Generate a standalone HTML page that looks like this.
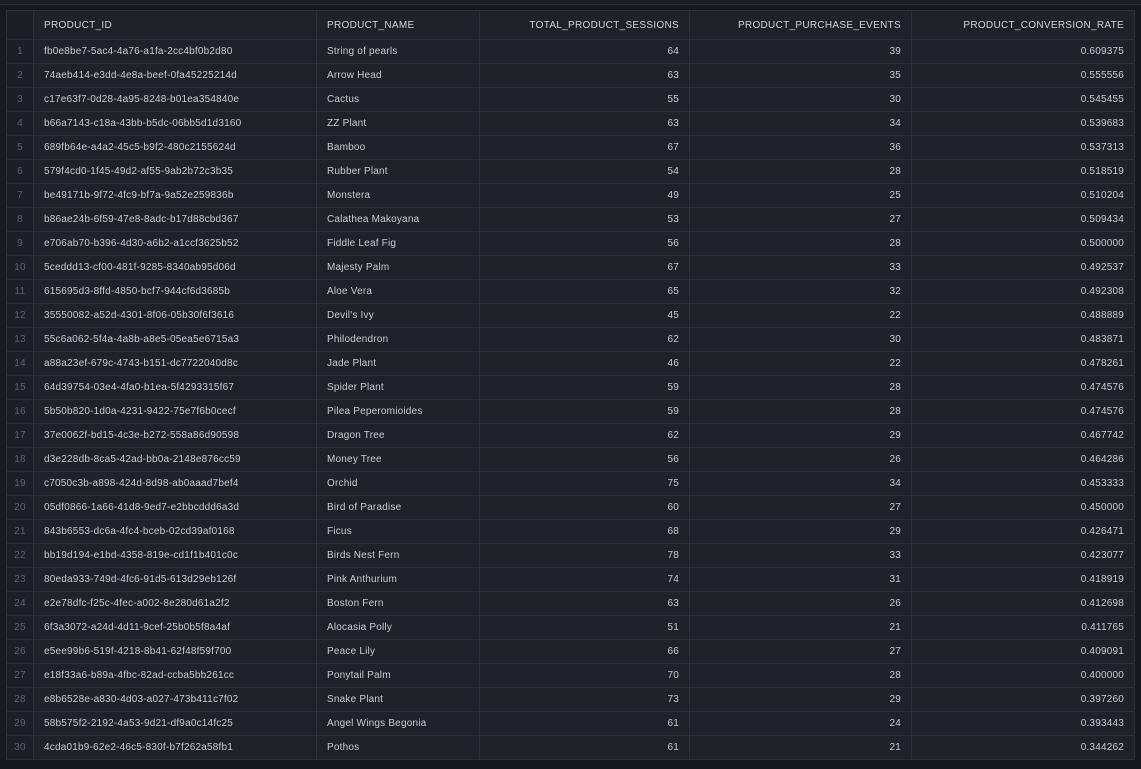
<!DOCTYPE html>
<html><head><meta charset="utf-8"><style>
html,body{margin:0;padding:0;background:#161a20;width:1141px;height:769px;overflow:hidden;font-family:"Liberation Sans",sans-serif;}
.top{position:absolute;left:0;top:0;width:1141px;height:4px;background:#1a1e25;border-bottom:1px solid #262b34;}
table{position:absolute;left:6px;top:10px;border-collapse:collapse;table-layout:fixed;width:1128px;background:#1e222b;border:1px solid #2e3440;}
td,th{border:1px solid #2b303a;height:23px;padding:0 10px;font-size:10px;letter-spacing:0.2px;color:#c8ccd3;white-space:nowrap;overflow:hidden;}
th{height:28px;font-weight:normal;color:#d0d3d9;text-align:left;font-size:10px;letter-spacing:0.3px;}
td.i,th.i{background:#1b1f27;color:#5d6370;text-align:center;padding:0;}
.r{text-align:right;}
</style></head><body><div class="top"></div>
<table>
<colgroup><col style="width:27px"><col style="width:283px"><col style="width:163px"><col style="width:210px"><col style="width:222px"><col style="width:223px"></colgroup>
<tr><th class="i"></th><th>PRODUCT_ID</th><th>PRODUCT_NAME</th><th class="r">TOTAL_PRODUCT_SESSIONS</th><th class="r">PRODUCT_PURCHASE_EVENTS</th><th class="r">PRODUCT_CONVERSION_RATE</th></tr>
<tr><td class="i">1</td><td>fb0e8be7-5ac4-4a76-a1fa-2cc4bf0b2d80</td><td>String of pearls</td><td class="r">64</td><td class="r">39</td><td class="r">0.609375</td></tr>
<tr><td class="i">2</td><td>74aeb414-e3dd-4e8a-beef-0fa45225214d</td><td>Arrow Head</td><td class="r">63</td><td class="r">35</td><td class="r">0.555556</td></tr>
<tr><td class="i">3</td><td>c17e63f7-0d28-4a95-8248-b01ea354840e</td><td>Cactus</td><td class="r">55</td><td class="r">30</td><td class="r">0.545455</td></tr>
<tr><td class="i">4</td><td>b66a7143-c18a-43bb-b5dc-06bb5d1d3160</td><td>ZZ Plant</td><td class="r">63</td><td class="r">34</td><td class="r">0.539683</td></tr>
<tr><td class="i">5</td><td>689fb64e-a4a2-45c5-b9f2-480c2155624d</td><td>Bamboo</td><td class="r">67</td><td class="r">36</td><td class="r">0.537313</td></tr>
<tr><td class="i">6</td><td>579f4cd0-1f45-49d2-af55-9ab2b72c3b35</td><td>Rubber Plant</td><td class="r">54</td><td class="r">28</td><td class="r">0.518519</td></tr>
<tr><td class="i">7</td><td>be49171b-9f72-4fc9-bf7a-9a52e259836b</td><td>Monstera</td><td class="r">49</td><td class="r">25</td><td class="r">0.510204</td></tr>
<tr><td class="i">8</td><td>b86ae24b-6f59-47e8-8adc-b17d88cbd367</td><td>Calathea Makoyana</td><td class="r">53</td><td class="r">27</td><td class="r">0.509434</td></tr>
<tr><td class="i">9</td><td>e706ab70-b396-4d30-a6b2-a1ccf3625b52</td><td>Fiddle Leaf Fig</td><td class="r">56</td><td class="r">28</td><td class="r">0.500000</td></tr>
<tr><td class="i">10</td><td>5ceddd13-cf00-481f-9285-8340ab95d06d</td><td>Majesty Palm</td><td class="r">67</td><td class="r">33</td><td class="r">0.492537</td></tr>
<tr><td class="i">11</td><td>615695d3-8ffd-4850-bcf7-944cf6d3685b</td><td>Aloe Vera</td><td class="r">65</td><td class="r">32</td><td class="r">0.492308</td></tr>
<tr><td class="i">12</td><td>35550082-a52d-4301-8f06-05b30f6f3616</td><td>Devil's Ivy</td><td class="r">45</td><td class="r">22</td><td class="r">0.488889</td></tr>
<tr><td class="i">13</td><td>55c6a062-5f4a-4a8b-a8e5-05ea5e6715a3</td><td>Philodendron</td><td class="r">62</td><td class="r">30</td><td class="r">0.483871</td></tr>
<tr><td class="i">14</td><td>a88a23ef-679c-4743-b151-dc7722040d8c</td><td>Jade Plant</td><td class="r">46</td><td class="r">22</td><td class="r">0.478261</td></tr>
<tr><td class="i">15</td><td>64d39754-03e4-4fa0-b1ea-5f4293315f67</td><td>Spider Plant</td><td class="r">59</td><td class="r">28</td><td class="r">0.474576</td></tr>
<tr><td class="i">16</td><td>5b50b820-1d0a-4231-9422-75e7f6b0cecf</td><td>Pilea Peperomioides</td><td class="r">59</td><td class="r">28</td><td class="r">0.474576</td></tr>
<tr><td class="i">17</td><td>37e0062f-bd15-4c3e-b272-558a86d90598</td><td>Dragon Tree</td><td class="r">62</td><td class="r">29</td><td class="r">0.467742</td></tr>
<tr><td class="i">18</td><td>d3e228db-8ca5-42ad-bb0a-2148e876cc59</td><td>Money Tree</td><td class="r">56</td><td class="r">26</td><td class="r">0.464286</td></tr>
<tr><td class="i">19</td><td>c7050c3b-a898-424d-8d98-ab0aaad7bef4</td><td>Orchid</td><td class="r">75</td><td class="r">34</td><td class="r">0.453333</td></tr>
<tr><td class="i">20</td><td>05df0866-1a66-41d8-9ed7-e2bbcddd6a3d</td><td>Bird of Paradise</td><td class="r">60</td><td class="r">27</td><td class="r">0.450000</td></tr>
<tr><td class="i">21</td><td>843b6553-dc6a-4fc4-bceb-02cd39af0168</td><td>Ficus</td><td class="r">68</td><td class="r">29</td><td class="r">0.426471</td></tr>
<tr><td class="i">22</td><td>bb19d194-e1bd-4358-819e-cd1f1b401c0c</td><td>Birds Nest Fern</td><td class="r">78</td><td class="r">33</td><td class="r">0.423077</td></tr>
<tr><td class="i">23</td><td>80eda933-749d-4fc6-91d5-613d29eb126f</td><td>Pink Anthurium</td><td class="r">74</td><td class="r">31</td><td class="r">0.418919</td></tr>
<tr><td class="i">24</td><td>e2e78dfc-f25c-4fec-a002-8e280d61a2f2</td><td>Boston Fern</td><td class="r">63</td><td class="r">26</td><td class="r">0.412698</td></tr>
<tr><td class="i">25</td><td>6f3a3072-a24d-4d11-9cef-25b0b5f8a4af</td><td>Alocasia Polly</td><td class="r">51</td><td class="r">21</td><td class="r">0.411765</td></tr>
<tr><td class="i">26</td><td>e5ee99b6-519f-4218-8b41-62f48f59f700</td><td>Peace Lily</td><td class="r">66</td><td class="r">27</td><td class="r">0.409091</td></tr>
<tr><td class="i">27</td><td>e18f33a6-b89a-4fbc-82ad-ccba5bb261cc</td><td>Ponytail Palm</td><td class="r">70</td><td class="r">28</td><td class="r">0.400000</td></tr>
<tr><td class="i">28</td><td>e8b6528e-a830-4d03-a027-473b411c7f02</td><td>Snake Plant</td><td class="r">73</td><td class="r">29</td><td class="r">0.397260</td></tr>
<tr><td class="i">29</td><td>58b575f2-2192-4a53-9d21-df9a0c14fc25</td><td>Angel Wings Begonia</td><td class="r">61</td><td class="r">24</td><td class="r">0.393443</td></tr>
<tr><td class="i">30</td><td>4cda01b9-62e2-46c5-830f-b7f262a58fb1</td><td>Pothos</td><td class="r">61</td><td class="r">21</td><td class="r">0.344262</td></tr>
</table></body></html>
